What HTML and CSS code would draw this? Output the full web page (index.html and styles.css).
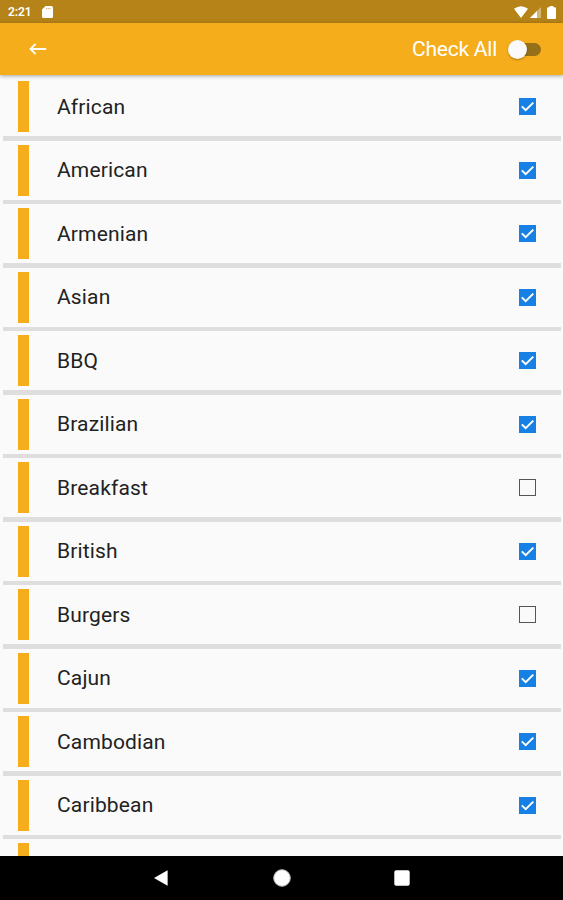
FILE: index.html
```html
<!DOCTYPE html>
<html lang="en">
<head>
  <meta charset="UTF-8">
  <meta name="viewport" content="width=device-width, initial-scale=1">
  <title>Cuisines</title>
  <link rel="stylesheet" href="styles.css">
</head>
<body>
  <!-- Status bar -->
  <div class="status-bar">
    <span class="time">2:21</span>
    <svg class="sd-icon" viewBox="0 0 11 12"><path d="M3.6 0H9.5Q11 0 11 1.5V10.5Q11 12 9.5 12H1.5Q0 12 0 10.5V3.6Z" fill="#fff"/><path d="M4 2.6H9" stroke="#b58317" stroke-width="1" stroke-dasharray="1.2 .6" opacity=".6"/></svg>
    <div class="status-icons">
      <svg width="14" height="12" viewBox="0 0 14 12"><path d="M0 2.7Q7-2.4 14 2.7L7 12Z" fill="#fff"/></svg>
      <svg class="signal" width="11" height="11" viewBox="0 0 11 11"><path d="M0 11 11 0V11Z" fill="#fff" opacity=".4"/><path d="M0 11 7 4V11Z" fill="#fff"/></svg>
      <svg class="battery" width="9" height="13" viewBox="0 0 9 13"><path d="M2.6 0H6.4V1.3H7.8Q9 1.3 9 2.5V11.8Q9 13 7.8 13H1.2Q0 13 0 11.8V2.5Q0 1.3 1.2 1.3H2.6Z" fill="#fff"/></svg>
    </div>
  </div>

  <header class="toolbar">
    <svg class="back" width="18" height="12" viewBox="0 0 18 12"><path d="M17.2 6H1.6M6.6.9 1.5 6 6.6 11.1" fill="none" stroke="#fff" stroke-width="1.9"/></svg>
    <label class="check-all">
      <span>Check All</span>
      <span class="switch"><span class="thumb"></span></span>
    </label>
  </header>

  <ul class="list">
    <li><span class="bar"></span><span class="name">African</span><span class="box checked"></span></li>
    <li><span class="bar"></span><span class="name">American</span><span class="box checked"></span></li>
    <li><span class="bar"></span><span class="name">Armenian</span><span class="box checked"></span></li>
    <li><span class="bar"></span><span class="name">Asian</span><span class="box checked"></span></li>
    <li><span class="bar"></span><span class="name">BBQ</span><span class="box checked"></span></li>
    <li><span class="bar"></span><span class="name">Brazilian</span><span class="box checked"></span></li>
    <li><span class="bar"></span><span class="name">Breakfast</span><span class="box"></span></li>
    <li><span class="bar"></span><span class="name">British</span><span class="box checked"></span></li>
    <li><span class="bar"></span><span class="name">Burgers</span><span class="box"></span></li>
    <li><span class="bar"></span><span class="name">Cajun</span><span class="box checked"></span></li>
    <li><span class="bar"></span><span class="name">Cambodian</span><span class="box checked"></span></li>
    <li><span class="bar"></span><span class="name">Caribbean</span><span class="box checked"></span></li>
    <li><span class="bar"></span></li>
  </ul>

  <!-- Android navigation -->
  <nav class="nav-bar">
    <svg width="16" height="18" viewBox="0 0 16 18"><path d="M14.6 1.2V16.8L1 9Z" fill="#fff"/></svg>
    <svg width="18" height="18" viewBox="0 0 18 18"><circle cx="9" cy="9" r="8.3" fill="#fff" stroke="#bbb" stroke-width="1"/></svg>
    <svg width="16" height="16" viewBox="0 0 16 16"><rect x=".3" y=".3" width="15.4" height="15.4" rx="1.8" fill="#fff"/></svg>
  </nav>

  <script>
    // Put a tick in every checked box
    document.querySelectorAll('.box.checked').forEach(box => {
      box.innerHTML = '<svg viewBox="0 0 17 17"><path d="M2.8 8.4 6.7 12.2 14.3 4.6" fill="none" stroke="#fff" stroke-width="2"/></svg>';
    });
  </script>
</body>
</html>
```
FILE: styles.css
```css
* {
  box-sizing: border-box;
  margin: 0;
  padding: 0;
}

body {
  display: flex;
  flex-direction: column;
  height: 900px;
  overflow: hidden;
  background-color: #fafafa;
  font-family: Roboto, sans-serif;
}

svg {
  display: block;
}

.status-bar {
  display: flex;
  align-items: center;
  height: 23px;
  flex-shrink: 0;
  padding: 1px 7px 0 8px;
  background-color: #b58317;
  color: white;
}

.time {
  width: 34px;
  font-size: 12px;
  font-weight: 600;
  letter-spacing: -0.1px;
}

.sd-icon {
  width: 11px;
  height: 12px;
}

.status-icons {
  display: flex;
  align-items: center;
  margin-left: auto;
}

.status-icons svg:first-child {
  margin-right: 1px;
}

.signal {
  margin-left: 1px;
}

.battery {
  margin-left: 6px;
}

.toolbar {
  display: flex;
  align-items: center;
  justify-content: space-between;
  height: 52px;
  flex-shrink: 0;
  padding: 0 22px 0 29px;
  background-color: #f5ad1b;
  color: white;
  box-shadow: 0 1px 4px rgba(0, 0, 0, 0.35);
  z-index: 1;
}

.check-all {
  display: flex;
  align-items: center;
  font-size: 21px;
  letter-spacing: -0.25px;
}

.switch {
  display: flex;
  align-items: center;
  width: 32px;
  height: 13px;
  margin-left: 12px;
  border-radius: 7px;
  background-color: #957019;
}

.thumb {
  width: 19px;
  height: 19px;
  flex-shrink: 0;
  margin-left: -1.5px;
  border-radius: 50%;
  background-color: #fafafa;
  box-shadow: 0 1px 2px rgba(0, 0, 0, 0.3);
}

.list {
  flex: 1;
  min-height: 0;
  padding: 2px 2px 0 3px;
  overflow: hidden;
  list-style: none;
}

.list li {
  display: flex;
  align-items: center;
  position: relative;
  height: 63.5px;
  padding: 0 25px 4.5px 15px;
}

/* divider */
.list li::after {
  content: "";
  position: absolute;
  left: 0;
  right: 0;
  bottom: 0;
  height: 4.5px;
  background-color: #dedede;
}

.bar {
  width: 11px;
  height: 51px;
  background-color: #f5ad1b;
}

.name {
  flex: 1;
  margin-left: 28px;
  color: #222;
  font-size: 21px;
  letter-spacing: 0.15px;
}

.box {
  width: 17px;
  height: 17px;
  border: 1.5px solid #555;
}

.box.checked {
  border: none;
  background-color: #1680e4;
}

.nav-bar {
  display: flex;
  align-items: center;
  justify-content: space-between;
  height: 44px;
  flex-shrink: 0;
  padding: 0 153px;
  background-color: black;
}
```
